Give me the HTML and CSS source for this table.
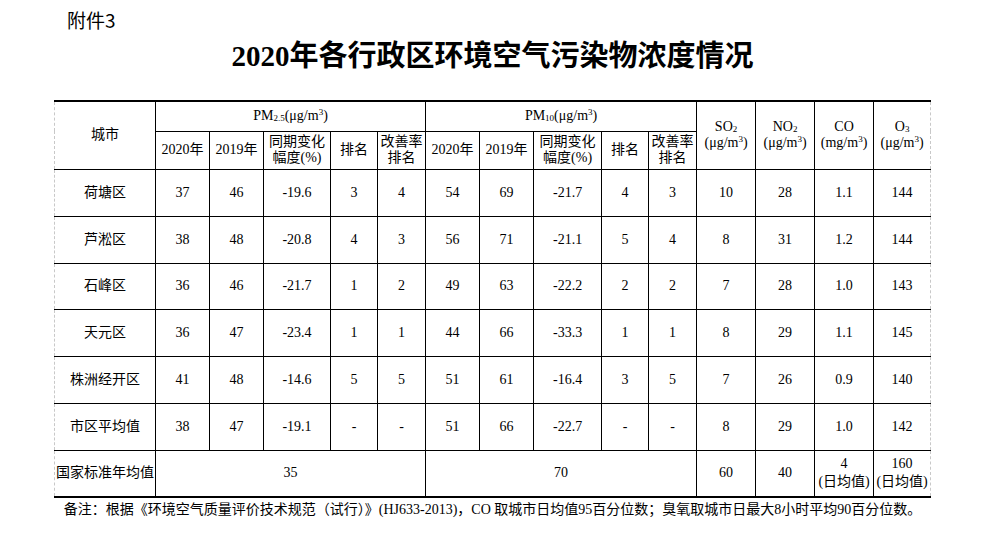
FILE: index.html
```html
<!DOCTYPE html>
<html lang="zh-CN">
<head>
<meta charset="utf-8">
<title>2020年各行政区环境空气污染物浓度情况</title>
<link rel="stylesheet" href="styles.css">
</head>
<body>
<div class="page">
  <div class="attach">附件3</div>
  <h1 class="title">2020年各行政区环境空气污染物浓度情况</h1>
  <table class="data">
    <colgroup>
      <col class="w101"><col class="w54"><col class="w54"><col class="w67"><col class="w47"><col class="w48">
      <col class="w54"><col class="w54"><col class="w68"><col class="w47"><col class="w48">
      <col class="w59"><col class="w59"><col class="w59"><col class="w57">
    </colgroup>
    <thead>
      <tr class="hr1">
        <th rowspan="2">城市</th>
        <th colspan="5">PM<sub>2.5</sub>(μg/m<sup>3</sup>)</th>
        <th colspan="5">PM<sub>10</sub>(μg/m<sup>3</sup>)</th>
        <th rowspan="2">SO<sub>2</sub><br>(μg/m<sup>3</sup>)</th>
        <th rowspan="2">NO<sub>2</sub><br>(μg/m<sup>3</sup>)</th>
        <th rowspan="2">CO<br>(mg/m<sup>3</sup>)</th>
        <th rowspan="2">O<sub>3</sub><br>(μg/m<sup>3</sup>)</th>
      </tr>
      <tr class="hr2">
        <th>2020年</th><th>2019年</th><th>同期变化<br>幅度(%)</th><th>排名</th><th>改善率<br>排名</th>
        <th>2020年</th><th>2019年</th><th>同期变化<br>幅度(%)</th><th>排名</th><th>改善率<br>排名</th>
      </tr>
    </thead>
    <tbody>
      <tr class="r47"><td class="city">荷塘区</td><td>37</td><td>46</td><td>-19.6</td><td>3</td><td>4</td><td>54</td><td>69</td><td>-21.7</td><td>4</td><td>3</td><td>10</td><td>28</td><td>1.1</td><td>144</td></tr>
      <tr class="r47"><td class="city">芦淞区</td><td>38</td><td>48</td><td>-20.8</td><td>4</td><td>3</td><td>56</td><td>71</td><td>-21.1</td><td>5</td><td>4</td><td>8</td><td>31</td><td>1.2</td><td>144</td></tr>
      <tr class="r46"><td class="city">石峰区</td><td>36</td><td>46</td><td>-21.7</td><td>1</td><td>2</td><td>49</td><td>63</td><td>-22.2</td><td>2</td><td>2</td><td>7</td><td>28</td><td>1.0</td><td>143</td></tr>
      <tr class="r47"><td class="city">天元区</td><td>36</td><td>47</td><td>-23.4</td><td>1</td><td>1</td><td>44</td><td>66</td><td>-33.3</td><td>1</td><td>1</td><td>8</td><td>29</td><td>1.1</td><td>145</td></tr>
      <tr class="r47"><td class="city">株洲经开区</td><td>41</td><td>48</td><td>-14.6</td><td>5</td><td>5</td><td>51</td><td>61</td><td>-16.4</td><td>3</td><td>5</td><td>7</td><td>26</td><td>0.9</td><td>140</td></tr>
      <tr class="r47"><td class="city">市区平均值</td><td>38</td><td>47</td><td>-19.1</td><td>-</td><td>-</td><td>51</td><td>66</td><td>-22.7</td><td>-</td><td>-</td><td>8</td><td>29</td><td>1.0</td><td>142</td></tr>
      <tr class="r47 last"><td class="city">国家标准年均值</td><td colspan="5">35</td><td colspan="5">70</td><td>60</td><td>40</td><td class="two">4<br>(日均值)</td><td class="two">160<br>(日均值)</td></tr>
    </tbody>
  </table>
  <p class="note">备注：根据《环境空气质量评价技术规范（试行）》(HJ633-2013)，CO 取城市日均值95百分位数；臭氧取城市日最大8小时平均90百分位数。</p>
</div>
</body>
</html>
```

FILE: styles.css
```css
html, body {
  margin: 0;
  padding: 0;
  background: #fff;
  color: #000;
}

.page {
  width: 877px;
  margin-left: 54px;
  padding-top: 10px;
  font-family: "Liberation Serif", "Noto Sans CJK SC", serif;
}

.attach {
  font-family: "Noto Sans CJK SC", sans-serif;
  font-size: 19px;
  line-height: 20px;
  height: 20px;
  padding-left: 13px;
}

.title {
  margin: 8px 0 0;
  text-align: center;
  font-size: 29px;
  line-height: 36px;
  height: 36px;
  font-weight: 700;
  font-family: "Liberation Serif", "Noto Sans CJK SC", serif;
}

.data {
  margin-top: 26px;
  width: 877px;
  table-layout: fixed;
  border-collapse: collapse;
  border-top: 2px solid #000;
  border-bottom: 2px solid #000;
  border-left: 1px dashed #c8c8c8;
  border-right: 1px dashed #c8c8c8;
  font-size: 14px;
}

.w101 { width: 101px; }
.w54 { width: 54px; }
.w67 { width: 67px; }
.w68 { width: 68px; }
.w47 { width: 47px; }
.w48 { width: 48px; }
.w59 { width: 59px; }
.w57 { width: 57px; }

.data th,
.data td {
  border: 1px solid #000;
  padding: 0;
  text-align: center;
  vertical-align: middle;
  font-weight: 400;
  line-height: 16px;
  white-space: nowrap;
}

.data tr > :first-child.city,
.data thead tr.hr1 > :first-child {
  border-left: none;
}

.data tr > :last-child {
  border-right: none;
}

.data tr.hr2 > :last-child {
  border-right: 1px solid #000;
}

.data thead tr.hr1 th {
  border-top: 2px solid #000;
}

.data tr.last td {
  border-bottom: 2px solid #000;
}

.hr1 { height: 30px; }
.hr2 { height: 38px; }
.r47 { height: 47px; }
.r46 { height: 46px; }

.data td.two {
  line-height: 18px;
}

.data sub {
  font-size: 9px;
  vertical-align: -1px;
  line-height: 0;
}

.data sup {
  font-size: 9px;
  vertical-align: 5px;
  line-height: 0;
}

.note {
  margin: 2px 0 0;
  text-align: center;
  font-size: 14px;
  line-height: 20px;
  white-space: nowrap;
}
```
